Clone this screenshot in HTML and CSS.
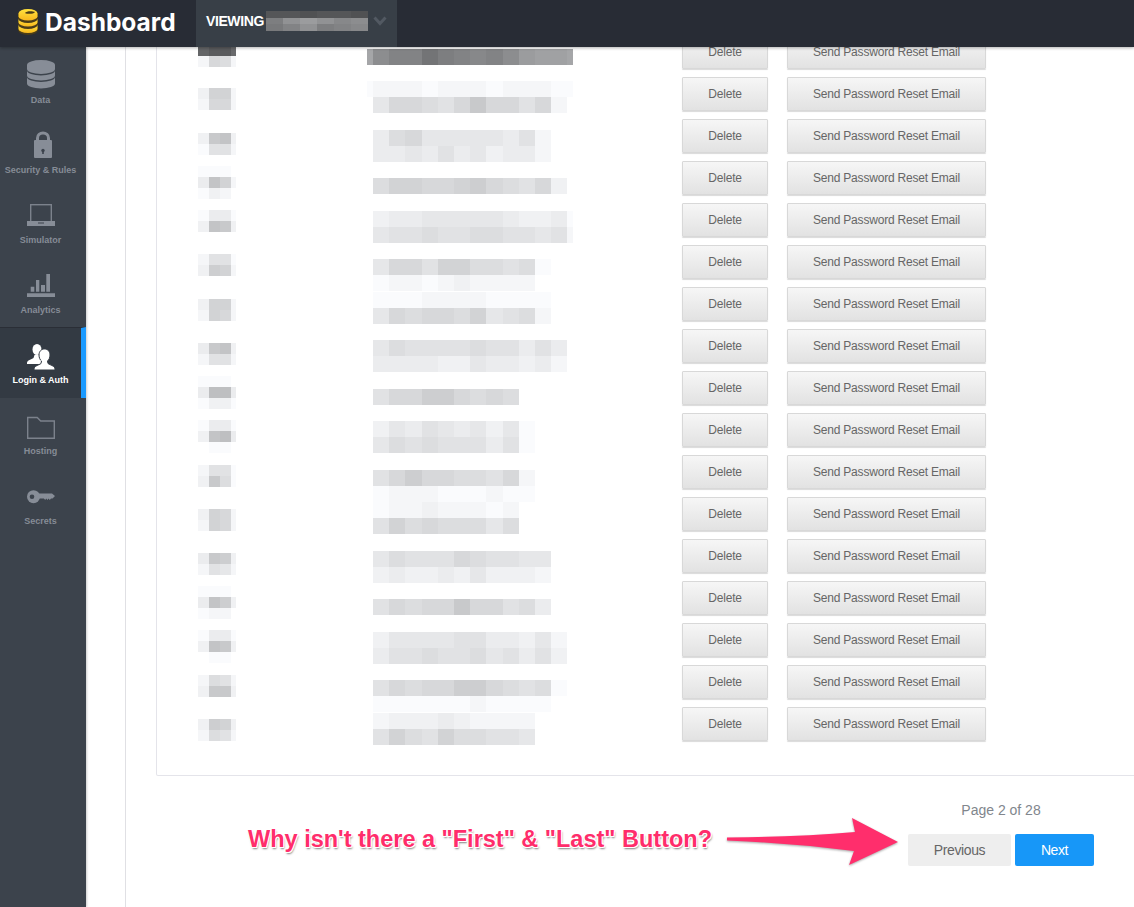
FILE: index.html
```html
<!DOCTYPE html>
<html lang="en">
<head>
    <meta charset="UTF-8">
    <meta name="viewport" content="width=device-width, initial-scale=1.0">
    <title>Dashboard - Login &amp; Auth</title>
    <link rel="stylesheet" href="styles.css">
</head>
<body>
    <header class="topbar">
        <div class="brand">
            <svg class="brand-logo" viewBox="0 0 20 26" width="20" height="26">
                <defs>
                    <linearGradient id="gold" x1="0" y1="0" x2="0" y2="1">
                        <stop offset="0" stop-color="#ffe23f"/>
                        <stop offset="1" stop-color="#f7b71d"/>
                    </linearGradient>
                </defs>
                <path fill="#4a3c18" d="M0 5a10 5 0 0 1 20 0v16a10 5 0 0 1-20 0z"/>
                <path fill="url(#gold)" d="M.5 4.5a9.5 4.5 0 0 1 19 0v3a9.500 4 0 0 1-19 0z"/>
                <path fill="url(#gold)" d="M.5 10a9.500 4 0 0 0 19 0v3.500a9.500 4 0 0 1-19 0z"/>
                <path fill="url(#gold)" d="M.5 16a9.500 4 0 0 0 19 0v4a9.500 4 0 0 1-19 0z"/>
                <path fill="#4a3c18" d="M7 4c1-2 7-2.500 10-1-1 2-7 2.500-10 1z"/>
            </svg>
            <span class="brand-name">Dashboard</span>
        </div>
        <div class="viewing">
            <span class="viewing-label">VIEWING</span>
            <div class="pixels pixels-name" data-pixels="yyzyyz qmkmon rpmqpo"></div>
            <svg class="chevron" viewBox="0 0 14 10" width="14" height="10">
                <polyline points="1.500,1.500 7,7.500 12.500,1.500" fill="none" stroke="#525962" stroke-width="3"/>
            </svg>
        </div>
    </header>

    <div class="layout">
        <nav class="sidebar">
            <a class="nav-item" href="#data">
                <svg class="nav-icon" viewBox="0 0 28 30">
                    <path d="M0 5a14 5 0 0 1 28 0v4a14 5 0 0 1-28 0z"/>
                    <path d="M0 10.500a14 5 0 0 0 28 0v5a14 5 0 0 1-28 0z"/>
                    <path d="M0 17a14 5 0 0 0 28 0v6.500a14 5 0 0 1-28 0z"/>
                </svg>
                <span>Data</span>
            </a>
            <a class="nav-item" href="#security">
                <svg class="nav-icon" viewBox="0 0 28 30">
                    <path d="M10.500 11V8a5.500 5 0 0 1 11 0v3" fill="none" stroke="#878d97" stroke-width="3"/>
                    <rect x="7" y="10" width="18" height="18" rx="1"/>
                    <circle class="hole" cx="16" cy="20.500" r="1.700"/>
                    <rect class="hole" x="15.200" y="20.500" width="1.600" height="3.500"/>
                </svg>
                <span>Security &amp; Rules</span>
            </a>
            <a class="nav-item" href="#simulator">
                <svg class="nav-icon" viewBox="0 0 28 30">
                    <rect class="line" x="3.700" y="4.700" width="20.600" height="17"/>
                    <path d="M0 21h28v5H0z"/>
                    <rect class="hole" x="11" y="22.500" width="6" height="1"/>
                </svg>
                <span>Simulator</span>
            </a>
            <a class="nav-item" href="#analytics">
                <svg class="nav-icon" viewBox="0 0 28 30">
                    <path d="M3.700 16.700h3.600v5H3.700zM9 10h3.300v11.700H9zM14 15h4v6.700h-4zM19.300 4H23v17.700h-3.700zM0 23.300h28V27H0z"/>
                </svg>
                <span>Analytics</span>
            </a>
            <a class="nav-item nav-item-active" href="#login">
                <svg class="nav-icon" viewBox="0 0 28 30">
                    <ellipse cx="10" cy="9.500" rx="4.500" ry="5.500"/>
                    <path d="M0 24v-1c0-3 4.500-3.500 6.500-5l1-3h5l1 3 3 2v4z"/>
                    <path class="cutout" d="M7 30v-1c0-3 5-4 7-5.500l.5-2.500c-1.500-1-2.500-3.500-2.500-6 0-3.500 2.200-6 5.500-6s5.500 2.500 5.500 6c0 2.500-1 5-2.500 6l.5 2.500c2 1.500 7 2.500 7 5.500v1z"/>
                </svg>
                <span>Login &amp; Auth</span>
            </a>
            <a class="nav-item" href="#hosting">
                <svg class="nav-icon" viewBox="0 0 28 30">
                    <path class="line" d="M.7 6.500h9.500l3.500 3.500h13.600v17.300H.7z"/>
                </svg>
                <span>Hosting</span>
            </a>
            <a class="nav-item" href="#secrets">
                <svg class="nav-icon" viewBox="0 0 28 30">
                    <circle cx="6.500" cy="15.700" r="6.500"/>
                    <path d="M11 12.500h14l3 2.500-2.500 2.500h-1.500l-1.200 1.500-1.300-1.500-1 1.500-1.300-1.500-1 1.500-1.300-1.500H11z"/>
                    <circle class="hole" cx="5" cy="15.700" r="2.300"/>
                </svg>
                <span>Secrets</span>
            </a>
        </nav>

        <main class="page">
            <div class="users-card" id="users"></div>

            <div class="pager">
                <p class="pager-count">Page 2 of 28</p>
                <div class="pager-buttons">
                    <button class="pager-btn">Previous</button>
                    <button class="pager-btn pager-btn-next">Next</button>
                </div>
            </div>
        </main>
    </div>

    <p class="note-text">Why isn't there a "First" &amp; "Last" Button?</p>
    <svg class="note-arrow" viewBox="0 0 185 65" width="185" height="65">
        <path d="M7 27.500Q80 27 135 22L132 8 178 32 129 55 134 41Q70 33 7 30.500z"/>
    </svg>

    <script src="app.js"></script>
</body>
</html>
```

FILE: styles.css
```css
body {
    font-family: "Liberation Sans", Arial, sans-serif;
    margin: 0;
    padding: 0;
    height: 907px;
    overflow: hidden;
    background-color: #fff;
    position: relative;
}
.topbar {
    position: relative;
    z-index: 2;
    display: flex;
    height: 47px;
    background-color: #282c35;
    box-shadow: 0 1px 3px rgba(0, 0, 0, 0.3);
}
.brand {
    display: flex;
    align-items: center;
    gap: 7px;
    width: 196px;
    padding: 0 0 3px 18px;
    box-sizing: border-box;
}
.brand-name {
    font-family: Inter, sans-serif;
    font-size: 24.500px;
    font-weight: 700;
    color: #fff;
}
.viewing {
    display: flex;
    align-items: center;
    width: 201px;
    padding: 0 0 5px 10px;
    box-sizing: border-box;
    background-color: #383f47;
}
.viewing-label {
    font-size: 14px;
    font-weight: bold;
    letter-spacing: -0.4px;
    color: #fff;
    width: 60px;
}
.chevron {
    margin-left: 5px;
}
.pixels {
    display: grid;
    grid-template-columns: 6px repeat(12, 16.200px) 6px;
}
.pixels-left {
    grid-template-columns: 11px 11px 11px 5px;
    grid-auto-rows: 11px;
}
.pixels-wide {
    grid-auto-rows: 16px;
}
.pixels-name {
    grid-template-columns: repeat(6, 17px);
    grid-auto-rows: 6.500px;
}
.layout {
    display: flex;
    height: 860px;
}
.sidebar {
    width: 86px;
    flex-shrink: 0;
    background-color: #3c434c;
    box-shadow: 1px 0 2px rgba(0, 0, 0, 0.2);
    position: relative;
    z-index: 1;
}
.nav-item {
    display: flex;
    flex-direction: column;
    align-items: center;
    box-sizing: border-box;
    height: 70px;
    padding-top: 13px;
    border-right: 5px solid transparent;
    font-size: 9px;
    font-weight: bold;
    line-height: 20px;
    color: #868c96;
    text-decoration: none;
}
.nav-icon {
    width: 28px;
    height: 30px;
    fill: #878d97;
}
.nav-icon .hole {
    fill: #3c434c;
}
.nav-icon .line {
    fill: none;
    stroke: #7c828c;
    stroke-width: 1.400;
}
.nav-item-active {
    height: 71px;
    padding-top: 12px;
    background-color: #333a43;
    border-top: 1px solid #2a2e36;
    border-right-color: #1a9aff;
    color: #fff;
}
.nav-item-active .nav-icon {
    fill: #fff;
}
.nav-item-active .cutout {
    stroke: #333a43;
    stroke-width: 1;
}
.page {
    flex: 1;
    min-width: 0;
    margin-left: 39px;
    padding-left: 30px;
    border-left: 1px solid #e0e0e4;
    overflow: hidden;
}
.users-card {
    margin: -12px -20px 0 0;
    padding-bottom: 26px;
    border: 1px solid #e4e4ea;
    border-top: 0;
    border-radius: 2px;
}
.user-row {
    display: grid;
    grid-template-columns: 169px 315px 105px 1fr;
    align-items: start;
    height: 42px;
    padding-left: 41px;
}
.row-btns {
    grid-column: 3 / 5;
    display: flex;
    gap: 19px;
}
.user-btn {
    height: 34px;
    padding: 0;
    font-family: "Liberation Sans", Arial, sans-serif;
    font-size: 12px;
    letter-spacing: -0.2px;
    color: #666;
    background: linear-gradient(#f6f6f6, #e2e2e2);
    border: 1px solid #d8d8d8;
    border-radius: 1px;
    box-shadow: 0 1px 1px rgba(0, 0, 0, 0.15);
}
.user-btn-delete {
    width: 86px;
}
.user-btn-reset {
    width: 199px;
}
.pager {
    width: 186px;
    margin: 25px 40px 0 auto;
    text-align: center;
}
.pager-count {
    margin: 0 0 15px;
    font-size: 14px;
    line-height: 18px;
    color: #81868d;
}
.pager-buttons {
    display: flex;
    gap: 4px;
}
.pager-btn {
    width: 103px;
    height: 32px;
    padding: 0;
    font-family: "Liberation Sans", Arial, sans-serif;
    font-size: 14px;
    letter-spacing: -0.4px;
    color: #666;
    background-color: #eee;
    border: 0;
    border-radius: 2px;
}
.pager-btn-next {
    width: 79px;
    color: #fff;
    background-color: #1797f8;
}
.note-text {
    position: absolute;
    left: 248px;
    top: 825px;
    margin: 0;
    font-size: 23.500px;
    font-weight: bold;
    line-height: 28px;
    white-space: nowrap;
    color: #ff2d6b;
    text-shadow: 1px 1px 0 #fff, -1px -1px 0 #fff, 1px -1px 0 #fff, -1px 1px 0 #fff, 1px 2px 2px rgba(0, 0, 0, 0.5);
}
.note-arrow {
    position: absolute;
    left: 720px;
    top: 810px;
    fill: #ff2e6c;
    filter: drop-shadow(0 1px 1px rgba(0, 0, 0, 0.35));
}
```

FILE: app.js
```js
// each blur block is rows of letters, one letter per pixel, 0 = white and up = darker
var rows = [
    { lt: 10, left: "vxxu 2872", wt: 14, wide: "inppsqpopnkjji" },
    { lt: 11, left: "3992 2882", wt: 4, wide: "12221222122211 0588768b886820" },
    { lt: 14, left: "3bc3 1662", wt: 11, wide: "04785555546200 04454645344200" },
    { lt: 5, left: "1110 4c92 1320", wt: 17, wide: "0799889a876830" },
    { lt: 7, left: "1441 3cb3", wt: 8, wide: "03445555543341 05667667766562" },
    { lt: 9, left: "2661 3a92", wt: 14, wide: "05886997767100 01221232222000" },
    { lt: 12, left: "3992 2982", wt: 5, wide: "01112222111100 05878879567200" },
    { lt: 14, left: "4bc3 2662", wt: 11, wide: "05766667664640 04444335443420" },
    { lt: 5, left: "1110 4dd4 1331", wt: 18, wide: "0688aa87870000" },
    { lt: 7, left: "1441 3cd4 0110", wt: 8, wide: "03546545351000 05767666461000" },
    { lt: 10, left: "2661 3b71", wt: 15, wide: "068a8877682000 01222111211000" },
    { lt: 12, left: "3982 2982", wt: 5, wide: "01223222120000 06978777570000" },
    { lt: 14, left: "4ba3 2652", wt: 12, wide: "05766687665500 03433435333200" },
    { lt: 5, left: "1110 4ca3 1220", wt: 18, wide: "068788b8867400" },
    { lt: 7, left: "1441 3cb3 0110", wt: 9, wide: "03555566443520 04667667564630" },
    { lt: 10, left: "2762 3bb3", wt: 15, wide: "068788aa876710 01111112111100" },
    { lt: 12, left: "3a93 2762", wt: 6, wide: "02333432222000 06976977665000" }
];

function fillPixels(el, data) {
    data.split(" ").forEach(function (line) {
        line.split("").forEach(function (ch) {
            var cell = document.createElement("i");
            var v = 255 - parseInt(ch, 36) * 5;
            cell.style.backgroundColor = "rgb(" + v + "," + (v + 1) + "," + Math.min(v + 3, 255) + ")";
            el.appendChild(cell);
        });
    });
}

function makeBlur(cls, top, data) {
    var el = document.createElement("div");
    el.className = "pixels " + cls;
    el.style.marginTop = top + "px";
    fillPixels(el, data);
    return el;
}

function makeButton(cls, label) {
    var btn = document.createElement("button");
    btn.className = "user-btn " + cls;
    btn.textContent = label;
    return btn;
}

var users = document.getElementById("users");
rows.forEach(function (row) {
    var el = document.createElement("div");
    el.className = "user-row";
    el.appendChild(makeBlur("pixels-left", row.lt, row.left));
    el.appendChild(makeBlur("pixels-wide", row.wt, row.wide));
    var btns = document.createElement("div");
    btns.className = "row-btns";
    btns.appendChild(makeButton("user-btn-delete", "Delete"));
    btns.appendChild(makeButton("user-btn-reset", "Send Password Reset Email"));
    el.appendChild(btns);
    users.appendChild(el);
});

var viewing = document.querySelector(".pixels-name");
fillPixels(viewing, viewing.getAttribute("data-pixels"));
```
